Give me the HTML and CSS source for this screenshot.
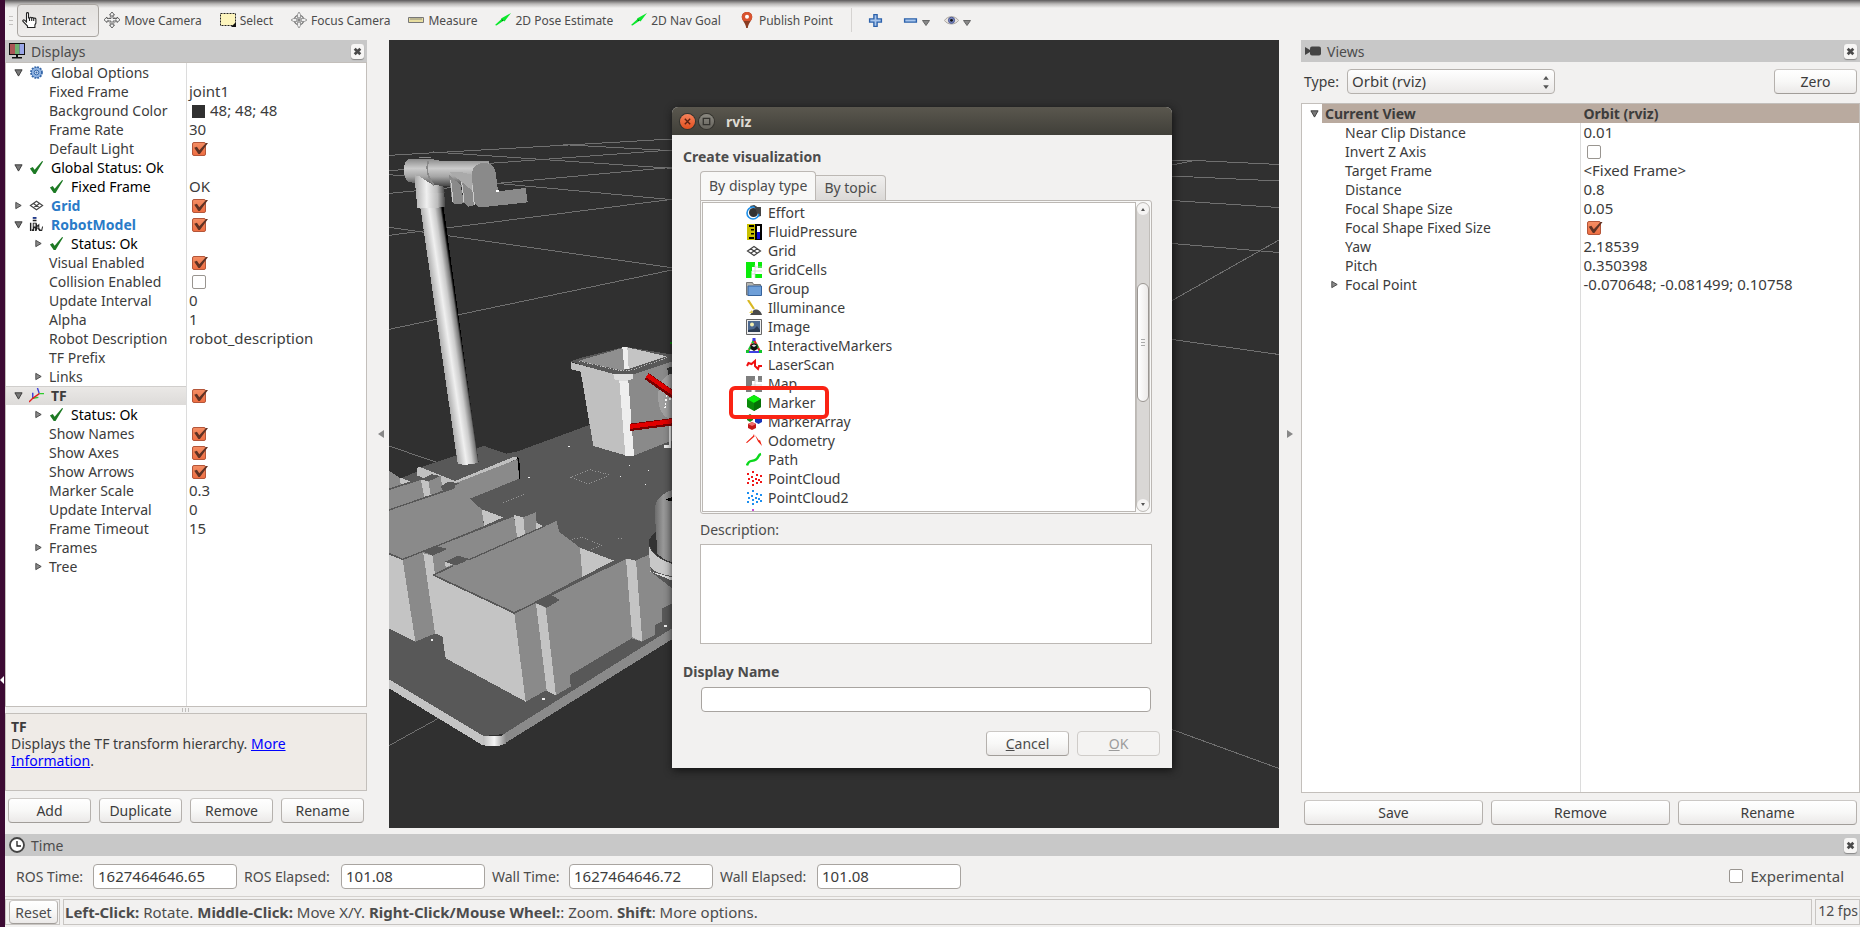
FILE: index.html
```html
<!DOCTYPE html>
<html lang="en">
<head>
<meta charset="utf-8">
<title>rviz</title>
<link rel="stylesheet" href="styles.css">
</head>
<body>
<svg class="sprite" aria-hidden="true">
  <symbol id="open" viewBox="0 0 10 10"><path d="M1 2h8L5 9z" fill="#777" stroke="#333"/></symbol>
  <symbol id="shut" viewBox="0 0 10 10"><path d="M2 1.500v7L8 5z" fill="#8a8a8a" stroke="#444"/></symbol>
  <symbol id="ok" viewBox="0 0 16 16"><path d="M1 9l3-1.500 2 3L14 1l1 .5L7 15H5z" fill="#1d7a24"/></symbol>
  <symbol id="gear" viewBox="0 0 16 16"><circle cx="8" cy="8" r="5.800" fill="#7ba3d8" stroke="#3566a8" stroke-width="2" stroke-dasharray="2 1.040"/><circle cx="8" cy="8" r="4.800" fill="#8fb3e2"/><circle cx="8" cy="8" r="2.500" fill="#c6d8f0" stroke="#3566a8"/><circle cx="8" cy="8" r="1" fill="#3566a8"/></symbol>
  <symbol id="grid" viewBox="0 0 16 16"><path d="M1.500 8L8 3.500 14.500 8 8 12.500zM4.700 5.800l6.600 4.500M11.300 5.800l-6.600 4.500" fill="none" stroke="#444" stroke-width="1.200"/></symbol>
  <symbol id="robot" viewBox="0 0 16 16"><path d="M4 0h4v2H4z" fill="#223a8a"/><path d="M4 3h4v1.500H4zM1 6h1.500v9H1zM4 6h4l1 3 2-2v5l2 2 1-4h1l-1 5h-3l-2-3-1 3H6.500v-3H5.500v3H3v-2h1z" fill="#222"/><path d="M5 7h2v3H5zM9 10h1v2H9z" fill="#ddd"/></symbol>
  <symbol id="axes" viewBox="0 0 16 16"><path d="M11 6L9 0M4 11V5" stroke="#3b3bd8" stroke-width="1.500"/><path d="M11 6h5M4 11l6-1" stroke="#2ecc2e" stroke-width="1.500"/><path d="M11 6L4 11l-4 4" stroke="#e02020" stroke-width="1.500" fill="none"/></symbol>
  <symbol id="hand" viewBox="0 0 16 16"><path d="M4.500 9V1.500C4.500.3 6.500.3 6.500 1.500V6h1.300c0-1 1.900-1 1.900.3 0-1 2-1 2 .4 0-1 2.200-.8 2.200.6V11l-1 2v2.500H5.500V14L1 9.500C.2 8.300 1.800 7.500 2.500 8.200L4.500 10zM7.500 6v3M9.700 6.300V9M11.700 6.700V9" fill="#fff" stroke="#222" stroke-width="1.100"/></symbol>
  <symbol id="move" viewBox="0 0 16 16"><path d="M8 0l2.500 3H9v3.500h4V5l3 2.800-3 2.700V9H9v4h1.500L8 16l-2.500-3H7V9H3v1.500L0 7.800 3 5v1.500h4V3H5.500z" fill="#f4f4f4" stroke="#555" stroke-width=".9"/><circle cx="8" cy="8" r="3.800" fill="none" stroke="#777" stroke-dasharray="1.500 1"/></symbol>
  <symbol id="select" viewBox="0 0 16 14"><path d="M.5.500h15v12H.5z" fill="#fdf5bd" stroke="#222" stroke-dasharray="2 1"/><path d="M16 9v5h-5z" fill="#111"/></symbol>
  <symbol id="focus" viewBox="0 0 16 16"><circle cx="8" cy="8" r="4.800" fill="none" stroke="#777" stroke-width="1.300"/><path d="M8 0l1.500 2.500V6.500h4L16 8l-2.500 1.500h-4v4L8 16l-1.500-2.500v-4h-4L0 8l2.500-1.500h4v-4z" fill="#eee" stroke="#888" stroke-width=".8"/><path d="M5 8h6M8 5v6" stroke="#666"/></symbol>
  <symbol id="ruler" viewBox="0 0 16 16"><path d="M.5 5.500h15v5H.5z" fill="#e8dea0" stroke="#777"/><path d="M3 6v2M5 6v2M7 6v2M9 6v2M11 6v2M13 6v2" stroke="#777" stroke-width=".8"/></symbol>
  <symbol id="arrow" viewBox="0 0 16 16"><path d="M0 13L6.500 7 6 6.500 16 1 9.500 9.500 8.500 8.700 1.500 13.500z" fill="#0be82c"/><path d="M6.500 6.700l2 2L7 9z" fill="#0a5c18"/></symbol>
  <symbol id="pin" viewBox="0 0 12 16"><path d="M6 0C2.500 0 .8 2.500.8 5c0 3.500 4 6 4.400 11h1.600c.4-5 4.400-7.500 4.400-11C11.200 2.500 9.500 0 6 0z" fill="#8a3c22"/><path d="M6 0C2.500 0 .8 2.500.8 5c0 1.500.7 2.800 1.600 4h7.200c.9-1.200 1.600-2.500 1.600-4C11.200 2.500 9.500 0 6 0z" fill="#d9532f"/><circle cx="6" cy="4.800" r="2" fill="#fff"/></symbol>
  <symbol id="plus" viewBox="0 0 14 14"><path d="M5.500 1.500h3v4h4v3h-4v4h-3v-4h-4v-3h4z" fill="#a9c6ec" stroke="#2d62ab" stroke-width="1.300"/></symbol>
  <symbol id="minus" viewBox="0 0 14 14"><path d="M1.500 5.500h11v3h-11z" fill="#a9c6ec" stroke="#2d62ab" stroke-width="1.300"/></symbol>
  <symbol id="eye" viewBox="0 0 16 16"><path d="M.5 8C4 2.500 12 2.500 15.500 8 12 13 4 13 .5 8z" fill="#e8e4e0" stroke="#a9a39d"/><circle cx="8" cy="7.800" r="3.300" fill="#7886bd" stroke="#4a5690"/><circle cx="8" cy="7.800" r="1.500" fill="#111"/></symbol>
  <symbol id="tri" viewBox="0 0 8 6"><path d="M.5.500h7L4 5.500z" fill="#888" stroke="#666"/></symbol>
  <symbol id="monitor" viewBox="0 0 16 16"><path d="M0 0h16v12H0z" fill="#111"/><path d="M1 1h5v10H1z" fill="#a55"/><path d="M6 1h4.500v10H6z" fill="#6db070"/><path d="M10.500 1H15v10h-4.500z" fill="#9aa6e8"/><path d="M7 12h2v2h4v1.500H3V14h4z" fill="#111"/></symbol>
  <symbol id="camera" viewBox="0 0 16 10"><rect x="5" y=".5" width="11" height="9" rx="2" fill="#444"/><path d="M0 1l5 3v2L0 9z" fill="#444"/></symbol>
  <symbol id="clock" viewBox="0 0 16 16"><circle cx="8" cy="8" r="7" fill="#fff" stroke="#444" stroke-width="1.800"/><path d="M8 4v5h4" fill="none" stroke="#222" stroke-width="1.300"/></symbol>
  <symbol id="x" viewBox="0 0 8 8"><path d="M1.500 1.500l5 5M6.500 1.500l-5 5" stroke="#4a4a4a" stroke-width="2.400"/></symbol>
  <symbol id="effort" viewBox="0 0 16 16"><path d="M4 1l4-1 3 2h4v9l-4 1z" fill="#444"/><circle cx="7" cy="8" r="6" fill="#fff" stroke="#1d8fe8" stroke-width="1.600"/><circle cx="7.500" cy="7.500" r="4.500" fill="#333"/><path d="M8 0l3 2h4v8l-4-2z" fill="#444"/></symbol>
  <symbol id="fluid" viewBox="0 0 16 16"><path d="M1 0h15v16H1z" fill="#c9c000"/><path d="M3 1h5v2H3zM3 13h5v2H3zM5 5h3v1.500H5zM5 9h3v1.500H5zM9 0h7v16H9z" fill="#000"/><path d="M11 2h3v6h-3z" fill="#fff"/><path d="M11 8h3v7h-3z" fill="#1010d0"/></symbol>
  <symbol id="cells" viewBox="0 0 16 16"><path d="M0 0h9v5H6v4h-.5V16H0zM12 0h4v6h-4zM9 12h7v4H9z" fill="#0aec0a"/><path d="M6 9h10M9 5h7M9 3v13M6 12h3" stroke="#ccc" stroke-width=".7"/></symbol>
  <symbol id="map" viewBox="0 0 16 16"><path d="M0 0h9v5H6v4h-.5V16H0zM12 0h4v6h-4zM9 12h7v4H9z" fill="#7e7e7e"/><path d="M6 9h10M9 5h7M9 3v13" stroke="#ccc" stroke-width=".7"/></symbol>
  <symbol id="folder" viewBox="0 0 16 16"><path d="M.5 1.500h6l1 2h7V14H.5z" fill="#b5b5b0" stroke="#777"/><path d="M2 5h13.500v9.500H2z" fill="#6e9fd8" stroke="#36639c"/></symbol>
  <symbol id="lamp" viewBox="0 0 16 16"><path d="M2 0l6 9" stroke="#d9b822" stroke-width="2.200"/><path d="M4 15l3-4c2-3 8-1 9 4z" fill="#4a4a4a"/><path d="M3 13l3-3 1 3z" fill="#e8cf50"/></symbol>
  <symbol id="image" viewBox="0 0 16 16"><path d="M.5.500h15v15H.5z" fill="#eee" stroke="#666"/><path d="M2 2h12v11H2z" fill="#4c688f"/><circle cx="6" cy="5.500" r="2" fill="#f3efb0"/><path d="M2 11l6-1 3-3 3 4v2H2z" fill="#2d3d55"/></symbol>
  <symbol id="imark" viewBox="0 0 16 16"><path d="M8 2L2 13.500" stroke="#12c52b" stroke-width="2.200" stroke-dasharray="4 3"/><path d="M8 2L2 13.500" stroke="#e02828" stroke-width="2.200" stroke-dasharray="3 4" stroke-dashoffset="3"/><path d="M8 2l6 11.500" stroke="#e02828" stroke-width="2.200"/><path d="M10 6l2 4" stroke="#12c52b" stroke-width="2.200"/><path d="M3 14h10" stroke="#2a2ae0" stroke-width="1.800"/><path d="M0 12h3v3H0zM13 12h3v3h-3z" fill="#12c52b"/><path d="M8 5l3.500 2v4L8 13l-3.500-2V7z" fill="#111"/><path d="M5.500 7.500l2.500-1 2.500 1L8 9z" fill="#ddd"/><path d="M6.500 0h3v3h-3z" fill="#3b3be0"/></symbol>
  <symbol id="laser" viewBox="0 0 16 16"><path d="M1 9l1.500-3 3 1L9 4v5l3 3 1-3h3" fill="none" stroke="#f01010" stroke-width="2"/></symbol>
  <symbol id="cube" viewBox="0 0 16 16"><path d="M8 0l7 4v8l-7 4-7-4V4z" fill="#0a8a0a"/><path d="M8 0l7 4-7 4-7-4z" fill="#0cf00c"/><path d="M8 8l7-4v8l-7 4z" fill="#067006"/></symbol>
  <symbol id="cubes" viewBox="0 0 16 16"><path d="M4 0l3 2v4L4 8 1 6V2z" fill="#158a15"/><path d="M12.500 2L16 4v4l-3.500 2L9 8V4z" fill="#1634b8"/><path d="M6 8l4 2v4l-4 2-4-2v-4z" fill="#c41818"/><path d="M6 8l4 2-4 2-4-2z" fill="#f07070"/></symbol>
  <symbol id="odom" viewBox="0 0 16 16"><path d="M0 9.500L7 3l1-2 .5 2.500L1 10zM9 2l4 5.500 1-.5 2 6-4-4.500z" fill="#ee2010"/></symbol>
  <symbol id="path" viewBox="0 0 16 16"><path d="M1 13.500c2-7 5-3 9-6 3-2 2-5 5-5.500" fill="none" stroke="#0bd81c" stroke-width="2.500"/></symbol>
  <symbol id="cloud" viewBox="0 0 16 16"><path d="M6 0h2v2H6zM1 2h2v2H1zM10 3h2v2h-2zM5 5h2v2H5zM14 4h2v2h-2zM2 7h2v2H2zM9 7h2v2H9zM6 9h2v2H6zM12 8h2v2h-2zM1 11h2v2H1zM10 11h2v2h-2zM14 10h2v2h-2zM6 13h2v2H6z" fill="currentColor"/></symbol>
</svg>

<div class="app">
  <div class="toolbar">
    <span class="grip"></span>
    <button class="tool active"><svg><use href="#hand"/></svg>Interact</button>
    <button class="tool"><svg><use href="#move"/></svg>Move Camera</button>
    <button class="tool"><svg><use href="#select"/></svg>Select</button>
    <button class="tool"><svg><use href="#focus"/></svg>Focus Camera</button>
    <button class="tool"><svg><use href="#ruler"/></svg>Measure</button>
    <button class="tool"><svg><use href="#arrow"/></svg>2D Pose Estimate</button>
    <button class="tool"><svg><use href="#arrow"/></svg>2D Nav Goal</button>
    <button class="tool"><svg><use href="#pin"/></svg>Publish Point</button>
    <span class="bar"></span>
    <button class="mini" aria-label="Add tool"><svg><use href="#plus"/></svg></button>
    <button class="mini" aria-label="Remove tool"><svg><use href="#minus"/></svg><svg class="caret"><use href="#tri"/></svg></button>
    <button class="mini" aria-label="Visibility"><svg><use href="#eye"/></svg><svg class="caret"><use href="#tri"/></svg></button>
  </div>

  <div class="main">
    <section class="dock displays">
      <header class="dock-title"><svg><use href="#monitor"/></svg>Displays<button class="close" aria-label="Close displays"><svg><use href="#x"/></svg></button></header>
      <div class="tree">
        <table>
          <tr><th class="top"><svg class="tw"><use href="#open"/></svg><svg><use href="#gear"/></svg>Global Options</th><td></td></tr>
          <tr><th>Fixed Frame</th><td>joint1</td></tr>
          <tr><th>Background Color</th><td><span class="swatch"></span>48; 48; 48</td></tr>
          <tr><th>Frame Rate</th><td>30</td></tr>
          <tr><th><label for="c1">Default Light</label></th><td><input type="checkbox" id="c1" checked></td></tr>
          <tr class="status"><th class="top"><svg class="tw"><use href="#open"/></svg><svg><use href="#ok"/></svg>Global Status: Ok</th><td></td></tr>
          <tr class="status"><th><svg><use href="#ok"/></svg>Fixed Frame</th><td>OK</td></tr>
          <tr class="display"><th class="top"><svg class="tw"><use href="#shut"/></svg><svg><use href="#grid"/></svg><label for="c2">Grid</label></th><td><input type="checkbox" id="c2" checked></td></tr>
          <tr class="display"><th class="top"><svg class="tw"><use href="#open"/></svg><svg><use href="#robot"/></svg><label for="c3">RobotModel</label></th><td><input type="checkbox" id="c3" checked></td></tr>
          <tr class="status"><th class="branch"><svg class="tw"><use href="#shut"/></svg><svg><use href="#ok"/></svg>Status: Ok</th><td></td></tr>
          <tr><th><label for="c4">Visual Enabled</label></th><td><input type="checkbox" id="c4" checked></td></tr>
          <tr><th><label for="c5">Collision Enabled</label></th><td><input type="checkbox" id="c5"></td></tr>
          <tr><th>Update Interval</th><td>0</td></tr>
          <tr><th>Alpha</th><td>1</td></tr>
          <tr><th>Robot Description</th><td>robot_description</td></tr>
          <tr><th>TF Prefix</th><td></td></tr>
          <tr><th class="branch"><svg class="tw"><use href="#shut"/></svg>Links</th><td></td></tr>
          <tr class="current"><th class="top"><svg class="tw"><use href="#open"/></svg><svg><use href="#axes"/></svg><label for="c6">TF</label></th><td><input type="checkbox" id="c6" checked></td></tr>
          <tr class="status"><th class="branch"><svg class="tw"><use href="#shut"/></svg><svg><use href="#ok"/></svg>Status: Ok</th><td></td></tr>
          <tr><th><label for="c7">Show Names</label></th><td><input type="checkbox" id="c7" checked></td></tr>
          <tr><th><label for="c8">Show Axes</label></th><td><input type="checkbox" id="c8" checked></td></tr>
          <tr><th><label for="c9">Show Arrows</label></th><td><input type="checkbox" id="c9" checked></td></tr>
          <tr><th>Marker Scale</th><td>0.3</td></tr>
          <tr><th>Update Interval</th><td>0</td></tr>
          <tr><th>Frame Timeout</th><td>15</td></tr>
          <tr><th class="branch"><svg class="tw"><use href="#shut"/></svg>Frames</th><td></td></tr>
          <tr><th class="branch"><svg class="tw"><use href="#shut"/></svg>Tree</th><td></td></tr>
        </table>
      </div>
      <div class="splitter"></div>
      <div class="help"><b>TF</b><br>Displays the TF transform hierarchy. <a href="#">More Information</a>.</div>
      <div class="buttons"><button>Add</button><button>Duplicate</button><button>Remove</button><button>Rename</button></div>
    </section>

    <div class="gutter left"><svg><path d="M8 1v8L2 5z" fill="#888"/></svg></div>

    <div class="viewport">
      <svg class="scene" viewBox="389 40 890 788" preserveAspectRatio="xMinYMin slice" shape-rendering="crispEdges">
        <defs>
          <linearGradient id="pole" gradientUnits="userSpaceOnUse" x1="173" y1="600" x2="241" y2="590"><stop offset="0" stop-color="#aaa"/><stop offset=".4" stop-color="#f0f0f0"/><stop offset=".65" stop-color="#ccc"/><stop offset=".88" stop-color="#777"/><stop offset=".97" stop-color="#000"/></linearGradient>
          <linearGradient id="collar"><stop offset="0" stop-color="#aaa"/><stop offset=".4" stop-color="#f0f0f0"/><stop offset=".75" stop-color="#bbb"/><stop offset="1" stop-color="#444"/></linearGradient>
          <linearGradient id="beam" x2="0" y2="1"><stop offset="0" stop-color="#888"/><stop offset=".35" stop-color="#ccc"/><stop offset=".65" stop-color="#a5a5a5"/><stop offset="1" stop-color="#444"/></linearGradient>
          <linearGradient id="round"><stop offset="0" stop-color="#bbb"/><stop offset=".5" stop-color="#f4f4f4"/><stop offset="1" stop-color="#8a8a8a"/></linearGradient>
          <linearGradient id="can"><stop offset="0" stop-color="#6a6a6a"/><stop offset=".5" stop-color="#999"/><stop offset="1" stop-color="#858585"/></linearGradient>
        </defs>
        <g fill="none" stroke="#707070">
          <path d="M1172 160.500h23l84 4M1172 165l23-4.500M1172 176l107 5M1172 200.500l107 7M1172 243.500l107 9M1172 300.500l107-60.500M1172 339.500l107 15M1172 729.500l107 39"/>
        </g>
        <g transform="translate(380 130) scale(.33333)">
          <g fill="none" stroke="#707070" stroke-width="3">
            <path d="M27 76L876 27M160 66l716 49M550 44l326 18M27 122L876 60M27 134l60 5M27 190l849-78M350 160l526 49M27 316l849-108M27 292l849 121M27 598l849-178M27 948l140 48M27 1847l150-83"/>
          </g>
          <g transform="translate(0 930)">
            <path d="M410 35L628-45 900-140V560L375 882l-65 6L27 718V130l95-40z" fill="#585858"/>
            <path d="M27 718l283 170v29L27 745z" fill="#c4c4c4"/>
            <path d="M365 886L876 565v33L365 916z" fill="#8a8a8a"/>
            <path d="M308 887h58l12-6v30l-22 7h-40l-8-5z" fill="url(#round)"/>
            <path d="M27 92l33 22 3 20-36 12z" fill="#8a8a8a"/><path d="M60 112l32 13-30 8z" fill="#c4c4c4"/>
            <path d="M27 150l96-30 12 50L27 209z" fill="#8a8a8a"/>
            <path d="M112 85l200-67 100 34-187 75z" fill="#585858"/>
            <path d="M112 85q0-5 8-4l105 42 165-68q15-8 25 0l-180 78-40 4-83-30z" fill="#c0c0c0"/>
            <path d="M225 130l187-72 6 58-148 60-50 12z" fill="#8a8a8a"/><path d="M412 52l6 5 3 60h-3z" fill="#000"/>
            <path d="M122 118l23 5 7 42-19 5z" fill="#c4c4c4"/><path d="M145 123l37-15 6 44-36 13z" fill="#8a8a8a"/><path d="M122 118l33-15 27 5-37 16z" fill="#585858"/>
            <path d="M27 210l198-67 45 34 35 31 7 50L68 358l-41-18z" fill="#8a8a8a"/>
            <path d="M178 142l27-17 33 5-28 15z" fill="#585858"/>
            <path d="M305 208l65 24-57 25z" fill="#c4c4c4"/>
            <path d="M27 344l41 16 38 245-79-40z" fill="#c4c4c4"/>
            <path d="M68 360l334-132 10 67-240 110 15 180-20-5-61 25z" fill="#8a8a8a"/>
            <path d="M130 340l30 7 35 245-30-12z" fill="#c4c4c4"/><path d="M130 335l35-18 37 10-44 20z" fill="#585858"/>
            <path d="M158 347l44-20 5 60-42 17z" fill="#8a8a8a"/>
            <path d="M402 225l28 7 5 55-23 10z" fill="#c4c4c4"/><path d="M430 232l37-15 5 50-37 20z" fill="#8a8a8a"/><path d="M468 248l26 12-24 12z" fill="#c4c4c4"/>
            <path d="M195 365l22 8-20 10z" fill="#c4c4c4"/><path d="M195 365l40-18 33 10-38 20z" fill="#585858"/>
            <path d="M163 405l367-162 7 32 63 48 7 87-204 108z" fill="#8a8a8a"/>
            <path d="M600 323l102 39-95 48z" fill="#c4c4c4"/>
            <path d="M160 405l243 115 34 265-240-130z" fill="#c4c4c4"/>
            <path d="M403 520l337-167 70-8 2 50 64 50v45l-29 15v40l-22 10v30l-40 20-30-10-185 110 2 35-44 25-31-13-60 33z" fill="#8a8a8a"/>
            <path d="M468 490l29 13 31 264-28-15zM738 355l30 7 19 243-30-13z" fill="#c4c4c4"/>
            <path d="M465 487l48-22 27 15-40 24zM738 355l30-13 35 3-35 17z" fill="#585858"/>
            <path d="M27 148l96-31M27 210l195-66M27 340l41 18 334-131M265 360l230-102" fill="none" stroke="#585858" stroke-width="4"/>
            <path d="M160 405l243 114 337-166M160 405l60-28" fill="none" stroke="#585858" stroke-width="5"/>
            <path d="M570 112l60-23 60 16-65 27zM575 298l35-6 55 25-38 15M370 187l62-24M715 297l12-2" fill="none" stroke="#b5b5b5" stroke-width="2" stroke-dasharray="3 5"/>
            <path d="M564 18h6v3h-6zM445 111h6v3h-6zM746 75h4v4h-4zM804 90h4v4h-4zM795 132h4v4h-4zM720 108h4v3h-4zM152 597h6v5h-6zM486 774h8v7h-8zM852 554h9v6h-9z" fill="#eee"/>
            <path d="M806 300l20-25 50 90v22q-50-10-70-65z" fill="#333"/><path d="M876 150q-50 18-52 60l8 130q15 18 44 27z" fill="url(#can)"/><path d="M855 180q10-8 21-8v12z" fill="#000"/>
            <path d="M806 308q4 38 70 64v36q-50-6-66-28z" fill="#c8c8c8"/><path d="M808 318q12 34 68 52" fill="none" stroke="#444" stroke-width="3"/><path d="M810 394l66 18v10z" fill="#ddd"/>
          </g>
          <path d="M573 695l17-8 145-37 150 25v17l-130 44h-50z" fill="#585858"/>
          <path d="M573 697l132 36v18l-132-33z" fill="#c0c0c0"/><path d="M755 735l130-44v15l-130 44z" fill="#8a8a8a"/><path d="M700 732h58v18l-20 4-35-3z" fill="#ddd"/>
          <path d="M597 692l138-40 4 66-20 2z" fill="#8f8f8f"/><path d="M742 652l118 27-118 39z" fill="#c4c4c4"/><path d="M727 652h15l4 64-13 2z" fill="#eee"/>
          <path d="M597 693l125 30h22l118-40" fill="none" stroke="#eee" stroke-width="2" stroke-dasharray="4 4"/>
          <path d="M602 725l118 27 17 224-97-28z" fill="#c0c0c0"/><path d="M744 752l118-40 18 218-118 47z" fill="#8a8a8a"/><path d="M718 752h27l17 225h-26z" fill="#eee"/>
          <ellipse cx="876" cy="800" rx="42" ry="68" fill="#a0a0a0"/><path d="M862 880h8v70h-18" fill="none" stroke="#eee" stroke-width="7"/><path d="M855 835l5-40M870 810v-20" stroke="#fff" stroke-width="4" stroke-dasharray="6 5"/>
          <path d="M800 738l80 57M750 892l130-17" stroke="#7a0000" stroke-width="22"/><path d="M801 736l80 55M750 890l130-17" stroke="#e00000" stroke-width="13"/><path d="M870 635h6v6h-6z" fill="#080"/>
          <path d="M121 232h70l105 765-14 5-32 3-17-5z" fill="url(#pole)"/>
          <path d="M103 135l60 25 28 10 5 60-30 4h-54z" fill="url(#collar)"/>
          <path d="M72 120q0-26 15-34h65l35 8h30q30-3 60 0l50 0v75l-120 0-50-4-52-5-20-5q-13-10-13-35z" fill="url(#beam)"/>
          <path d="M103 135l18 5q25 20 44 25l26 5 3 20h-84z" fill="url(#collar)"/>
          <path d="M117 83h36M145 92q-12 40 17 74" fill="none" stroke="#888" stroke-width="5"/>
          <path d="M207 135l35 30 10 55-28 3-8-10zM242 155l35 20 8 50-20 5-12-10z" fill="#8a8a8a"/>
          <path d="M207 125h33l40 10v50l-36-30z" fill="#aaa"/>
          <path d="M275 130q5-30 37-32 35 2 36 38l6 48 83-10 6 43-130 14h-18l-12-12z" fill="#8a8a8a"/><path d="M212 150l7 65M245 155l7 60M277 165l6 60" stroke="#ccc" stroke-width="3"/><path d="M349 181h8v4h-8z" fill="#fff"/>
        </g>
      </svg>

      <div class="dialog" role="dialog" aria-label="rviz">
        <div class="dialog-title">
          <button class="wm red" aria-label="Close"><svg viewBox="0 0 14 14"><path d="M4.500 4.500l5 5M9.500 4.500l-5 5" stroke="#5b2010" stroke-width="1.300"/></svg></button>
          <button class="wm" aria-label="Maximize"><svg viewBox="0 0 14 14"><path d="M4 4h6v6H4z" fill="none" stroke="#33322e" stroke-width="1.200"/></svg></button>
          rviz
        </div>
        <div class="dialog-body">
          <h2>Create visualization</h2>
          <div class="tabs" role="tablist"><button role="tab" class="tab on">By display type</button><button role="tab" class="tab">By topic</button></div>
          <div class="pane">
            <ul class="types">
              <li><svg><use href="#effort"/></svg>Effort</li>
              <li><svg><use href="#fluid"/></svg>FluidPressure</li>
              <li><svg><use href="#grid"/></svg>Grid</li>
              <li><svg><use href="#cells"/></svg>GridCells</li>
              <li><svg><use href="#folder"/></svg>Group</li>
              <li><svg><use href="#lamp"/></svg>Illuminance</li>
              <li><svg><use href="#image"/></svg>Image</li>
              <li><svg><use href="#imark"/></svg>InteractiveMarkers</li>
              <li><svg><use href="#laser"/></svg>LaserScan</li>
              <li><svg><use href="#map"/></svg>Map</li>
              <li class="marked"><svg><use href="#cube"/></svg>Marker</li>
              <li><svg><use href="#cubes"/></svg>MarkerArray</li>
              <li><svg><use href="#odom"/></svg>Odometry</li>
              <li><svg><use href="#path"/></svg>Path</li>
              <li class="c-red"><svg><use href="#cloud"/></svg>PointCloud</li>
              <li class="c-blue"><svg><use href="#cloud"/></svg>PointCloud2</li>
              <li class="c-pink"><svg><use href="#cloud"/></svg>PointStamped</li>
            </ul>
            <div class="scroll"><span class="up"><svg><path d="M2 5h4L4 2z" fill="#555"/></svg></span><span class="thumb"></span><span class="down"><svg><path d="M2 1h4L4 4z" fill="#555"/></svg></span></div>
          </div>
          <label class="desc" for="desc">Description:</label>
          <textarea id="desc" readonly></textarea>
          <label class="name" for="dname">Display Name</label>
          <input type="text" id="dname">
          <div class="dialog-buttons"><button><u>C</u>ancel</button><button disabled><u>O</u>K</button></div>
        </div>
      </div>
    </div>

    <div class="gutter"><svg><path d="M2 1v8l6-4z" fill="#888"/></svg></div>

    <section class="dock views">
      <header class="dock-title"><svg class="cam"><use href="#camera"/></svg>Views<button class="close" aria-label="Close views"><svg><use href="#x"/></svg></button></header>
      <div class="type-row"><label for="vtype">Type:</label><span class="combo"><select id="vtype"><option>Orbit (rviz)</option></select><svg viewBox="0 0 8 16"><path d="M1 5h6L4 1zM1 11h6l-3 4z" fill="#555"/></svg></span><button>Zero</button></div>
      <div class="tree">
        <table>
          <tr class="head"><th class="top"><svg class="tw"><use href="#open"/></svg>Current View</th><td>Orbit (rviz)</td></tr>
          <tr><th>Near Clip Distance</th><td>0.01</td></tr>
          <tr><th><label for="v1">Invert Z Axis</label></th><td><input type="checkbox" id="v1"></td></tr>
          <tr><th>Target Frame</th><td>&lt;Fixed Frame&gt;</td></tr>
          <tr><th>Distance</th><td>0.8</td></tr>
          <tr><th>Focal Shape Size</th><td>0.05</td></tr>
          <tr><th><label for="v2">Focal Shape Fixed Size</label></th><td><input type="checkbox" id="v2" checked></td></tr>
          <tr><th>Yaw</th><td>2.18539</td></tr>
          <tr><th>Pitch</th><td>0.350398</td></tr>
          <tr><th class="branch"><svg class="tw"><use href="#shut"/></svg>Focal Point</th><td>-0.070648; -0.081499; 0.10758</td></tr>
        </table>
      </div>
      <div class="buttons"><button>Save</button><button>Remove</button><button>Rename</button></div>
    </section>
  </div>

  <section class="time">
    <header class="dock-title"><svg><use href="#clock"/></svg>Time<button class="close" aria-label="Close time"><svg><use href="#x"/></svg></button></header>
    <div class="time-row">
      <label for="t1">ROS Time:</label><input type="text" id="t1" value="1627464646.65">
      <label for="t2">ROS Elapsed:</label><input type="text" id="t2" value="101.08">
      <label for="t3">Wall Time:</label><input type="text" id="t3" value="1627464646.72">
      <label for="t4">Wall Elapsed:</label><input type="text" id="t4" value="101.08">
      <input type="checkbox" id="exp"><label for="exp" class="exp">Experimental</label>
    </div>
  </section>

  <footer class="statusbar">
    <div class="cell"><button>Reset</button></div>
    <div class="cell msg"><span><b>Left-Click:</b> Rotate. <b>Middle-Click:</b> Move X/Y. <b>Right-Click/Mouse Wheel:</b>: Zoom. <b>Shift</b>: More options.</span></div>
    <div class="cell fps">12 fps</div>
  </footer>
</div>
<svg class="edge-mark" viewBox="0 0 5 10"><path d="M4 1v8L0 5z" fill="#fff"/></svg>
</body>
</html>
```
FILE: styles.css
```css
*, *::before, *::after { box-sizing: border-box; }
body {
  margin: 0;
  height: 100vh;
  overflow: hidden;
  background: #f2f1f0;
  color: #3c3c3c;
  font: 14px/19px "Noto Sans", "Open Sans", sans-serif;
}
.sprite { position: absolute; width: 0; height: 0; }
svg { width: 16px; height: 16px; flex: none; }
button, input, select, textarea { font: inherit; color: inherit; margin: 0; }
button { padding: 0; }

.app {
  height: 100vh;
  display: flex;
  flex-direction: column;
  border-left: 5px solid #3c0a33;
}
.edge-mark { position: absolute; left: 0; top: 675px; width: 5px; height: 10px; }

/* toolbar */
.toolbar {
  height: 40px;
  flex: none;
  display: flex;
  align-items: center;
  padding-left: 4px;
  font-size: 12px;
  color: #4c4c4c;
  background: linear-gradient(#5c5a5b, #bcbab9 4px, #f2f1f0 8px);
}
.grip { width: 4px; height: 9px; margin-right: 4px; background: repeating-linear-gradient(#c4c2c0 0 1px, transparent 1px 4px); }
.tool {
  display: flex;
  align-items: center;
  gap: 4px;
  height: 33px;
  padding: 0 6px 0 4px;
  margin-right: 6px;
  border: 1px solid transparent;
  border-radius: 4px;
  background: none;
}
.tool.active { margin-right: 0; padding-right: 12px; border-color: #aaa6a2; background: linear-gradient(#e3e1df, #efedec); }
.bar { width: 1px; height: 24px; margin: 0 16px 0 5px; background: #d5d3d1; }
.mini { display: flex; align-items: center; gap: 4px; border: 0; background: none; margin-right: 14px; }
.mini svg { width: 15px; height: 15px; }
.mini .caret { width: 8px; height: 6px; margin-top: 6px; }
.mini:nth-last-child(3) { margin-right: 20px; }

/* docks */
.main { flex: 1; min-height: 0; display: flex; margin-bottom: 6px; }
.dock { display: flex; flex-direction: column; }
.displays { width: 362px; flex: none; }
.views { width: 559px; flex: none; }
.gutter { width: 22px; flex: none; display: flex; align-items: center; justify-content: center; }
.gutter.left { padding-left: 6px; }
.gutter svg { width: 10px; height: 10px; }
.dock-title {
  height: 22px;
  flex: none;
  display: flex;
  align-items: center;
  gap: 6px;
  padding: 0 3px 0 4px;
  color: #4c4c4c;
  background: #c8c8c8;
}
.dock-title .cam { height: 10px; }
.close {
  display: flex;
  align-items: center;
  justify-content: center;
  width: 13px;
  height: 15px;
  margin-left: auto;
  border: 0;
  border-radius: 3px;
  background: #f7f6f5;
  box-shadow: 0 1px 1px #888;
}
.close svg { width: 9px; height: 9px; }

.displays .tree { --split: 181px; }
.views .tree { --split: 50%; }
.tree {
  flex: 1;
  min-height: 0;
  border: 1px solid #c3bfbb;
  background: linear-gradient(#dcdcdc, #dcdcdc) calc(var(--split) - 1px) 0 / 1px 100% no-repeat #fff;
}
.views .tree { background-position: 50% 0; }
table { width: 100%; border-collapse: collapse; table-layout: fixed; }
th, td { height: 19px; padding: 0; white-space: nowrap; text-align: left; font-weight: normal; }
th { width: var(--split); display: flex; align-items: center; padding-left: 43px; }
.views th { width: 100%; }
.views tr > :first-child { width: 278px; }
th svg { width: 15px; height: 15px; margin-right: 7px; }
th .tw { width: 9px; height: 9px; margin-right: 6px; }
th.top { padding-left: 8px; }
th.branch { padding-left: 28px; }
td { padding-left: 3px; vertical-align: middle; font-size: 15px; }
td input { margin-left: 3px; }
.status th { color: #000; }
.display th { color: #2a7bc8; font-weight: bold; }
.current th { font-weight: bold; width: 180px; background: linear-gradient(#d0cecc 1px, #eae8e6 1px, #dddbd9); }
.swatch { display: inline-block; width: 13px; height: 13px; margin: 0 5px 0 3px; vertical-align: -2px; background: #303030; }
.head { background: linear-gradient(90deg, #fff 20px, #b9aa9f 20px); }
.head th, .head td { font-weight: bold; font-size: 14px; }

input[type="checkbox"] {
  appearance: none;
  display: block;
  flex: none;
  width: 14px;
  height: 14px;
  border: 1px solid #999590;
  border-radius: 2px;
  background: #fff;
}
input[type="checkbox"]:checked { border-color: #b4563a; background: linear-gradient(#f48d63, #ee6f43); }
input[type="checkbox"]:checked::before {
  content: "";
  display: block;
  width: 15px;
  height: 12px;
  background: #5f3224;
  clip-path: polygon(8% 44%, 26% 36%, 42% 64%, 90% 0, 100% 4%, 46% 96%, 36% 96%);
}

.splitter { height: 6px; flex: none; background: repeating-linear-gradient(90deg, #c0bebc 0 1px, transparent 1px 3px) center / 8px 4px no-repeat; }
.help { height: 78px; flex: none; padding: 4px 5px; line-height: 17px; border: 1px solid #c3bfbb; background: #efebe7; }
.help a { color: #00f; }

.buttons { display: flex; gap: 8px; padding: 7px 3px 5px; }
.buttons button, .type-row button, .dialog-buttons button, .cell button {
  flex: 1;
  height: 25px;
  border: 1px solid #b5b1ad;
  border-top-color: #cbc8c5;
  border-bottom-color: #a19d99;
  border-radius: 4px;
  background: linear-gradient(#fff, #f8f8f7 50%, #ebe9e8);
}
.views .buttons { padding: 7px 3px 3px; }

.type-row { display: flex; align-items: center; padding: 7px 3px 9px; }
.type-row label { width: 43px; }
.combo { position: relative; width: 208px; }
.combo select { appearance: none; width: 100%; height: 25px; padding: 0 4px; border: 1px solid #b5b1ad; border-radius: 4px; font-size: 15px; background: linear-gradient(#fff, #ebe9e8); }
.combo svg { position: absolute; right: 5px; top: 6px; width: 8px; height: 15px; }
.type-row button { flex: none; width: 83px; margin-left: auto; }

/* 3D view */
.viewport { position: relative; flex: 1; min-width: 0; background: #303030; }
.scene { position: absolute; inset: 0; width: 100%; height: 100%; }

.dialog {
  position: absolute;
  left: 283px;
  top: 67px;
  width: 500px;
  background: #f2f1f0;
  border-radius: 6px 6px 0 0;
  box-shadow: 1px 2px 8px #111;
}
.dialog-title {
  display: flex;
  align-items: center;
  gap: 4px;
  height: 28px;
  padding-left: 8px;
  border-radius: 6px 6px 0 0;
  background: linear-gradient(#5a574e, #403f39);
  color: #dfdbd2;
  font-weight: bold;
}
.wm { width: 15px; height: 15px; border: 0; border-radius: 50%; background: linear-gradient(#8b8981, #66645d); box-shadow: 0 0 0 1px #34332e; display: flex; }
.wm svg { width: 15px; height: 15px; }
.wm.red { background: linear-gradient(#f6825b, #e1501f); }
.wm:not(.red) { margin: 0 8px 0 0; }
.dialog-body { display: flex; flex-direction: column; padding: 12px 12px 12px 11px; color: #4c4c4c; }
h2 { margin: 0; font-size: 14px; line-height: 19px; }
.tabs { display: flex; align-items: flex-end; margin: 5px 0 -1px 17px; height: 30px; }
.tab { height: 26px; padding: 0 8px 2px; border: 1px solid #bcb8b4; border-left: 0; border-radius: 0 4px 0 0; background: linear-gradient(#f0efee, #dbd9d7); }
.tab.on { height: 30px; border-left: 1px solid #bcb8b4; border-radius: 4px 4px 0 0; border-bottom-color: #f8f8f7; background: #f8f8f7; }
.pane { display: flex; height: 314px; margin: 0 8px 0 17px; padding: 1px; border: 1px solid #bcb8b4; border-radius: 0 3px 3px; background: #f8f8f7; }
.types { flex: 1; height: 310px; margin: 0; padding: 0; list-style: none; overflow: hidden; border: 1px solid #bcb8b4; background: #fff; color: #3c3c3c; }
.types li { position: relative; display: flex; align-items: center; gap: 6px; height: 19px; padding-left: 43px; }
.c-red svg { color: #f01818; }
.c-blue svg { color: #1d8ff0; }
.c-pink svg { color: #c84fd0; }
.types .marked { z-index: 1; }
.marked::after { content: ""; position: absolute; left: 26px; top: -7px; width: 100px; height: 33px; border: 4px solid #fa2314; border-radius: 6px; }
.scroll { display: flex; flex-direction: column; width: 14px; height: 310px; border: 1px solid #c0bdb9; border-radius: 7px; background: #d9d7d5; overflow: hidden; }
.scroll .up, .scroll .down { height: 12px; display: flex; align-items: center; justify-content: center; background: #f5f4f3; border-radius: 6px; }
.scroll svg { width: 8px; height: 6px; }
.thumb { height: 119px; margin: 68px 0 auto; border: 1px solid #9a9692; border-radius: 6px; background: repeating-linear-gradient(#aaa 0 1px, transparent 1px 3px) center / 4px 8px no-repeat, linear-gradient(90deg, #fff, #eceae9); }
.desc { margin: 6px 0 5px 17px; }
textarea { height: 100px; margin: 0 8px 0 17px; resize: none; border: 1px solid #bcb8b4; background: #fff; }
.name { margin: 18px 0 6px; font-weight: bold; }
input[type="text"] { height: 25px; padding: 0 4px; border: 1px solid #a8a4a0; border-radius: 4px; font-size: 15px; background: #fff; }
#dname { margin: 0 9px 0 18px; }
.dialog-buttons { display: flex; justify-content: flex-end; gap: 8px; margin-top: 19px; }
.dialog-buttons button { flex: none; width: 83px; }
.dialog-buttons button:disabled { color: #9c9c9c; border-color: #cfccc9; background: #f4f3f2; }

/* time */
.time-row { display: flex; align-items: center; height: 40px; padding: 0 16px 0 11px; color: #4c4c4c; }
.time-row input[type="text"] { width: 144px; margin-right: 7px; color: #3c3c3c; }
.time-row label { width: 77px; }
.time-row label[for="t2"], .time-row label[for="t4"] { width: 97px; }
.time-row #exp { margin-left: auto; }
.time-row .exp { width: auto; margin-left: 8px; font-size: 15px; }

.statusbar { flex: none; display: flex; gap: 3px; height: 31px; padding: 2px 0 3px; border-top: 1px solid #d4d1ce; color: #4c4c4c; }
.cell { display: flex; align-items: center; border: 1px solid #c8c5c2; height: 26px; }
.cell button { flex: none; width: 49px; height: 24px; margin: 0 1px 0 3px; }
.msg { flex: 1; padding-left: 1px; font-size: 15px; }
.fps { padding: 0 1px 4px 2px; }
```
